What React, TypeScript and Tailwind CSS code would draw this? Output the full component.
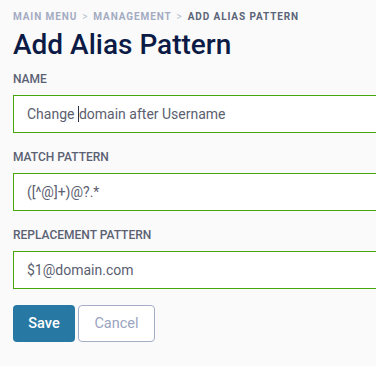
export default function App() {
  const fields = [
    { label: "NAME", value: "Change domain after Username", caret: 7 },
    { label: "MATCH PATTERN", value: "([^@]+)@?.*" },
    { label: "REPLACEMENT PATTERN", value: "$1@domain.com" },
  ];

  return (
    <div className="min-h-[366px] w-[376px] overflow-hidden bg-[#fafafa] pl-[13px] pt-[9px] font-['Roboto',sans-serif]">
      {/* breadcrumb */}
      <nav className="flex items-center gap-[5px] whitespace-nowrap text-[10px] font-bold tracking-[0.9px]">
        <span className="text-[#a3abc2]">MAIN MENU</span>
        <span className="font-normal text-[#b7bdcc]">&gt;</span>
        <span className="text-[#a3abc2]">MANAGEMENT</span>
        <span className="font-normal text-[#b7bdcc]">&gt;</span>
        <span className="text-[#5b6478]">ADD ALIAS PATTERN</span>
      </nav>

      <h1 className="mt-[5px] text-[28px] font-medium leading-[32px] text-[#0c1a46]">Add Alias Pattern</h1>

      <form className="mt-[11px] flex flex-col">
        {fields.map((field) => (
          <div key={field.label} className="mb-[17px] flex flex-col">
            <label className="mb-[9px] text-[12px] font-medium leading-[14px] text-[#5a6173]">{field.label}</label>
            <div className="flex h-[38px] w-[400px] items-center border border-[#46a80f] bg-white px-[13px] text-[14px] text-[#5b6070]">
              {field.caret ? (
                <>
                  <span className="whitespace-pre">{field.value.slice(0, field.caret)}</span>
                  <span className="h-[16px] w-px bg-[#2b3245]" />
                  <span>{field.value.slice(field.caret)}</span>
                </>
              ) : (
                field.value
              )}
            </div>
          </div>
        ))}

        <div className="-mt-px flex gap-[3px]">
          <button type="button" className="h-[37px] w-[62px] rounded-[4px] bg-[#2779a3] text-[14.5px] font-medium text-white">
            Save
          </button>
          <button
            type="button"
            className="h-[37px] w-[77px] rounded-[4px] border border-[#a4adc4] bg-white text-[14.5px] text-[#9aa5c0]"
          >
            Cancel
          </button>
        </div>
      </form>
    </div>
  );
}
